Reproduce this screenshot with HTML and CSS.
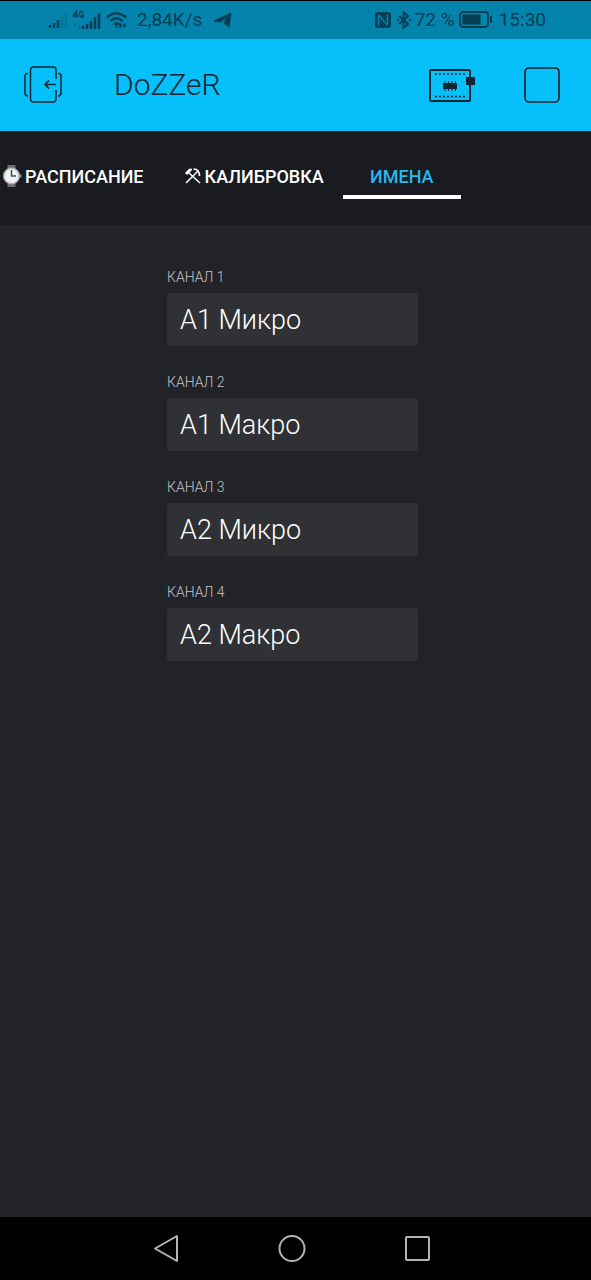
FILE: index.html
```html
<!DOCTYPE html>
<html lang="ru">
<head>
<meta charset="utf-8">
<meta name="viewport" content="width=device-width, initial-scale=1">
<title>DoZZeR</title>
<link rel="stylesheet" href="styles.css">
</head>
<body>
<div class="app">
  <div class="status">
    <div class="status-group">
      <svg width="20" height="18" viewBox="0 0 20 18" stroke="currentColor" stroke-width="2.400"><path d="M2 17v-3M6 17v-5M10 17V9"/><path d="M14 17V6M18 17V3" opacity=".2"/></svg>
      <svg class="signal-4g" width="30" height="20" viewBox="0 0 30 20" fill="none" stroke="currentColor"><path d="M4.500 8V1L1.500 6H6M11 2.500C10 1 7.500 1 7.500 4v1c0 3 3.500 3 3.500 1V5H9.500" stroke-width="1.400"/><path d="M3 13v4M7 15v4" stroke-width="1.500" opacity=".3"/><path d="M11 19v-3M15 19v-5M19 19v-8M23 19V7M27 19V3" stroke-width="2.600"/></svg>
      <svg width="22" height="18" viewBox="0 0 22 18" fill="none" stroke="currentColor" stroke-width="2.400"><path d="M1 6.500Q10 -2 20 6.500M4.500 10Q10 4.500 16.500 10M8 13.500q2.500-2.500 5 0"/><path d="M9.500 15.500h2M14.500 12.500v4M18.500 12.500v4"/></svg>
      <span class="speed">2,84K/s</span>
      <svg class="plane" width="20" height="16" viewBox="0 0 20 16" fill="currentColor"><path d="M1 9 18 1 16 15 11 11 14 5 7 10z" stroke="currentColor" stroke-linejoin="round"/></svg>
    </div>
    <div class="status-group">
      <svg width="18" height="18" viewBox="0 0 18 18"><rect x="1" y="1" width="16" height="16" rx="3" fill="currentColor"/><path d="M4.500 4.500v10M5 4l8 10M13.500 3.500v10" fill="none" stroke="#0484ac" stroke-width="1.500"/></svg>
      <svg class="bluetooth" width="16" height="18" viewBox="0 0 16 18" fill="none" stroke="currentColor" stroke-width="2"><path d="m3 5 9 8-4.500 4V1L12 5l-9 8"/><path d="M1 9h2M13 9h2"/></svg>
      <span>72 %</span>
      <svg class="battery" width="34" height="18" viewBox="0 0 34 18"><rect x="1" y="1" width="28" height="15" rx="3" fill="none" stroke="currentColor" stroke-width="1.800"/><path d="M3.500 3.500h18v10h-18z" fill="currentColor"/><path d="M32 5v7" stroke="currentColor" stroke-width="2"/></svg>
      <span class="clock">15:30</span>
    </div>
  </div>

  <header class="header">
    <button class="icon-button" aria-label="Выход">
      <svg width="38" height="38" viewBox="0 0 38 38" fill="none" stroke="currentColor" stroke-width="1.500"><path d="M32 13V4q0-3-3-3H9.500q-3 0-3 3v29q0 3 3 3H29q3 0 3-3V24"/><path d="M32 18.500H21M25 14.500l-4 4 4 4"/><path d="M4 7.500Q1 7 1 10v17q0 3 3 3M34 7.500q3-.5 3 2.500v17q0 3-3 3"/></svg>
    </button>
    <h1 class="title">DoZZeR</h1>
    <button class="icon-button" aria-label="Устройство">
      <svg width="46" height="34" viewBox="0 0 46 34"><rect x="1" y="2" width="40" height="31" rx="1" fill="none" stroke="currentColor" stroke-width="2"/><path d="M6 6h31M6 28.500h31" stroke="currentColor" stroke-width="1.500" stroke-dasharray="2 2"/><path d="M37 9h9v8h-9zM14 15h14v6H14z" fill="currentColor"/><path d="M15.500 14h12M15.500 22h12" stroke="currentColor" stroke-width="2" stroke-dasharray="1 2.500"/></svg>
    </button>
    <button class="icon-button stop" aria-label="Стоп">
      <svg width="36" height="38" viewBox="0 0 36 38"><rect x="1" y="2" width="34" height="34" rx="4" fill="none" stroke="currentColor" stroke-width="1.700"/></svg>
    </button>
  </header>

  <nav class="tabs">
    <button class="tab">
      <svg width="20" height="24" viewBox="0 0 20 24"><path d="M5.500 1h8v6h-8zM5.500 17h8v6h-8z" fill="#776965"/><circle cx="9.500" cy="12" r="8.500" fill="#aeb7ba"/><circle cx="9.500" cy="12" r="7" fill="#f1f3f3"/><path d="M9.500 6v6H14" fill="none" stroke="#45494d" stroke-width="1.500"/><path d="M18 10.500h1.500v3H18z" fill="#879093"/></svg>
      <span>РАСПИСАНИЕ</span>
    </button>
    <button class="tab">
      <svg width="18" height="18" viewBox="0 0 18 18" fill="none" stroke="currentColor" stroke-width="1.500"><path d="M2 16 14 4M5 6l11 10"/><path d="M2 7 6.500 2.500" stroke-width="3"/><path d="M5.500 2.500H8"/><path d="M9.500 2q6 0 6 7" stroke-width="1.700"/></svg>
      <span>КАЛИБРОВКА</span>
    </button>
    <button class="tab active" aria-current="page"><span>ИМЕНА</span></button>
  </nav>

  <main class="content">
    <form class="names">
      <label class="label" for="c1">КАНАЛ 1</label>
      <input class="field" id="c1" type="text" value="A1 Микро">
      <label class="label" for="c2">КАНАЛ 2</label>
      <input class="field" id="c2" type="text" value="A1 Макро">
      <label class="label" for="c3">КАНАЛ 3</label>
      <input class="field" id="c3" type="text" value="A2 Микро">
      <label class="label" for="c4">КАНАЛ 4</label>
      <input class="field" id="c4" type="text" value="A2 Макро">
    </form>
  </main>

  <nav class="system-nav">
    <button class="icon-button" aria-label="Назад"><svg width="28" height="30" viewBox="0 0 28 30" fill="none" stroke="currentColor" stroke-width="2" stroke-linejoin="round"><path d="M25 2v25L3 14.500z"/></svg></button>
    <button class="icon-button" aria-label="Домой"><svg width="28" height="30" viewBox="0 0 28 30" fill="none" stroke="currentColor" stroke-width="2"><circle cx="14" cy="14.500" r="12.500"/></svg></button>
    <button class="icon-button" aria-label="Недавние"><svg width="28" height="30" viewBox="0 0 28 30" fill="none" stroke="currentColor" stroke-width="2"><rect x="2" y="3" width="23" height="23" rx="1"/></svg></button>
  </nav>
</div>
</body>
</html>
```
FILE: styles.css
```css
* {
  box-sizing: border-box;
}

body {
  margin: 0;
  background: #222328;
  color: #fff;
  font-family: Roboto, "Noto Sans", sans-serif;
}

button {
  padding: 0;
  border: 0;
  background: none;
  color: inherit;
  font: inherit;
}

svg {
  display: block;
  flex: none;
}

.app {
  display: flex;
  flex-direction: column;
  min-height: 100vh;
}

.status {
  display: flex;
  align-items: center;
  justify-content: space-between;
  height: 39px;
  padding: 0 45px 0 48px;
  border-top: 1px solid #000;
  background: #0484ac;
  color: #053e55;
  font-size: 19px;
  line-height: 24px;
  white-space: nowrap;
}

.status-group {
  display: flex;
  align-items: center;
}

.signal-4g {
  margin: 0 4px;
}

.speed {
  margin: 0 11px 0 9px;
}

.bluetooth {
  margin: 0 3px 0 4px;
}

.battery {
  margin: 0 6px 0 4px;
}

.header {
  display: flex;
  align-items: center;
  height: 92px;
  padding: 0 31px 0 24px;
  background: #05c0fb;
  color: #12242f;
}

.title {
  flex: 1;
  margin: 0 0 0 52px;
  font-size: 30px;
  font-weight: 300;
  line-height: 40px;
}

.stop {
  margin-left: 49px;
}

.tabs {
  display: flex;
  align-items: flex-start;
  gap: 19px;
  height: 94px;
  padding-top: 26px;
  background: #1a1b20;
}

.tab {
  display: flex;
  align-items: center;
  gap: 3px;
  height: 42px;
  padding: 0 0 0 21px;
  border-bottom: 4px solid transparent;
  font-size: 18px;
  font-weight: 500;
  white-space: nowrap;
}

.tab:first-child {
  padding-left: 2px;
}

.tab.active {
  justify-content: center;
  min-width: 118px;
  padding: 0;
  border-color: #fff;
  color: #27b7ef;
}

.content {
  display: grid;
  flex: 1;
  grid-template-columns: 167fr 251fr 173fr;
  align-items: start;
  padding-top: 42px;
}

.names {
  display: flex;
  flex-direction: column;
  grid-column: 2;
}

.label {
  height: 26px;
  color: #c2c3c6;
  font-size: 14px;
  font-weight: 300;
  line-height: 20px;
}

.field {
  width: 100%;
  height: 53px;
  margin: 0 0 26px;
  padding: 0 13px;
  border: 0;
  border-radius: 3px;
  background: #303135;
  color: #fff;
  font: 300 27px Roboto, "Noto Sans", sans-serif;
}

.system-nav {
  display: flex;
  align-items: center;
  justify-content: center;
  gap: 98px;
  height: 63px;
  padding-right: 7px;
  background: #000;
  color: #b4b4b4;
}
```
